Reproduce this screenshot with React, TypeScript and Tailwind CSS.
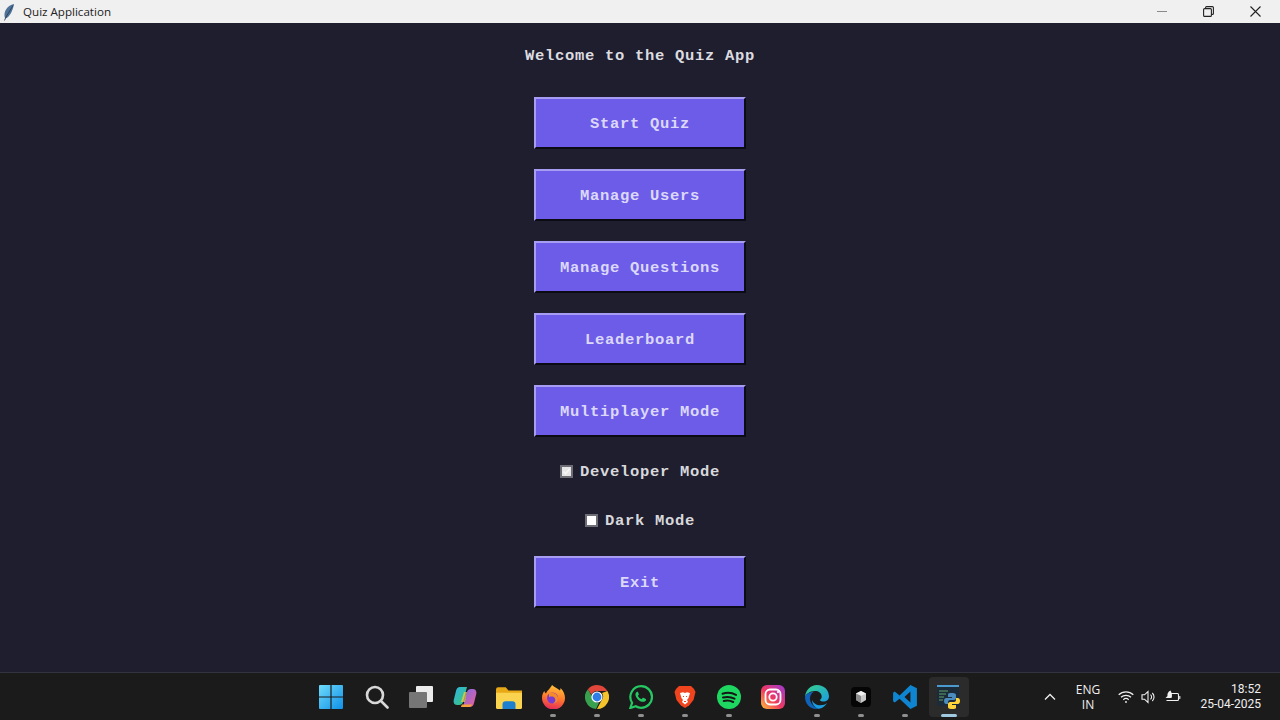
import type { ReactNode } from 'react'

const menuItems = ['Start Quiz', 'Manage Users', 'Manage Questions', 'Leaderboard', 'Multiplayer Mode']

function MenuButton({ label }: { label: string }) {
  return (
    <button className="flex h-[52px] w-[212px] items-center justify-center border-2 border-t-[#a79df2] border-l-[#a79df2] border-r-[#0b0b14] border-b-[#0b0b14] bg-[#6c5ce7] pt-[3px] font-['Liberation_Mono',monospace] text-[15.5px] font-bold tracking-[0.7px] text-[#dcd8fa]">
      {label}
    </button>
  )
}

function CheckRow({ label, checked, className }: { label: string; checked?: boolean; className: string }) {
  return (
    <div className={`flex h-5 items-center gap-[7px] font-['Liberation_Mono',monospace] text-[15.5px] font-bold tracking-[0.7px] text-[#d8d8dc] ${className}`}>
      <span className={`flex h-[13px] w-[13px] items-center justify-center border-2 border-[#6d6d76] ${checked ? 'bg-[#e6e6e6]' : 'bg-white'}`}>
        {checked && (
          <svg width="9" height="9" viewBox="0 0 9 9">
            <path d="M1.500 4.500 3.600 6.800 7.600 2" fill="none" stroke="#f6f6f6" strokeWidth="1.400" />
          </svg>
        )}
      </span>
      <span className="pt-[3px]">{label}</span>
    </div>
  )
}

function Slot({ children, dot, active, className = '' }: { children: ReactNode; dot?: boolean; active?: boolean; className?: string }) {
  return (
    <div className={`relative flex h-10 w-10 items-center justify-center rounded ${active ? 'bg-[#2b2b2b]' : ''} ${className}`}>
      {children}
      {dot && <span className="absolute bottom-0 left-1/2 h-[3px] w-[6px] -translate-x-1/2 rounded-full bg-[#8f8f8f]" />}
      {active && <span className="absolute bottom-0 left-1/2 h-[3px] w-4 -translate-x-1/2 rounded-full bg-[#9fc9e0]" />}
    </div>
  )
}

function TaskbarIcons() {
  return (
    <div className="flex items-center gap-1">
      <Slot>
        <svg width="24" height="24" viewBox="0 0 24 24">
          <defs>
            <linearGradient id="win" x1="0" y1="0" x2="1" y2="1">
              <stop offset="0" stopColor="#6fdcfb" />
              <stop offset="1" stopColor="#0f8fe8" />
            </linearGradient>
          </defs>
          <path d="M0 1a1 1 0 0 1 1-1h10.400v11.400H0zM12.600 0H23a1 1 0 0 1 1 1v10.400H12.600zM0 12.600h11.400V24H1a1 1 0 0 1-1-1zM12.600 12.600H24V23a1 1 0 0 1-1 1H12.600z" fill="url(#win)" />
        </svg>
      </Slot>
      <Slot className="ml-[2px]">
        <svg width="24" height="24" viewBox="0 0 24 24" fill="none" stroke="#d8d8d8" strokeWidth="2.600">
          <circle cx="10" cy="10" r="8" />
          <path d="M16 16l6.500 6.500" strokeLinecap="round" />
        </svg>
      </Slot>
      <Slot>
        <svg width="24" height="24" viewBox="0 0 24 24">
          <rect x="7" y="1" width="17" height="16" rx="1" fill="#ececec" />
          <rect x="0" y="7" width="18" height="16" rx="1" fill="#767676" />
        </svg>
      </Slot>
      <Slot>
        <svg width="24" height="24" viewBox="0 0 24 24">
          <defs>
            <linearGradient id="cop1" x1="0" y1="0" x2="1" y2="1">
              <stop offset="0" stopColor="#2fb4e9" />
              <stop offset="1" stopColor="#3bc46f" />
            </linearGradient>
            <linearGradient id="cop2" x1="0" y1="0" x2="1" y2="1">
              <stop offset="0" stopColor="#7a6cf0" />
              <stop offset="1" stopColor="#ef5f8f" />
            </linearGradient>
          </defs>
          <path d="M7 2h7l-4 15c-.5 2-2 3-4 3H4c-3 0-4-3-3-6l2-8c.5-2.500 2-4 4-4z" fill="url(#cop1)" />
          <path d="M17 22h-7l4-15c.5-2 2-3 4-3h2c3 0 4 3 3 6l-2 8c-.5 2.500-2 4-4 4z" fill="url(#cop2)" />
          <path d="M8 22h8c1.500 0 2.500-1 3-2.500H9c-.5 1-1 2-1 2.500z" fill="#f6a23c" />
          <path d="M14 7h-3l-3 10h4z" fill="#f2d14c" opacity=".7" />
        </svg>
      </Slot>
      <Slot>
        <svg width="26" height="26" viewBox="0 0 24 24">
          <path d="M0 5a2 2 0 0 1 2-2h7l2.500 3H24v16H0z" fill="#e8a917" />
          <path d="M0 8h24v14a1 1 0 0 1-1 1H1a1 1 0 0 1-1-1z" fill="#fbd44f" />
          <path d="M6 23v-4a3 3 0 0 1 3-3h6a3 3 0 0 1 3 3v4z" fill="#1c7fd0" />
        </svg>
      </Slot>
      <Slot dot>
        <svg width="24" height="24" viewBox="0 0 24 24">
          <defs>
            <linearGradient id="ff" x1="0.500" y1="0" x2="0.300" y2="1">
              <stop offset="0" stopColor="#ffc23a" />
              <stop offset="0.500" stopColor="#ff7a2a" />
              <stop offset="1" stopColor="#e3265f" />
            </linearGradient>
          </defs>
          <path d="M11 0c3 2.500 6 3.500 8 5.500.5-1 .5-1.500.5-2.500 3 3 4.500 6.500 4.500 10a11.500 11.500 0 0 1-23 0c0-3 1-5.500 2.500-7 0 1 .5 2 1.500 2.500C6 5.500 9 4 11 0z" fill="url(#ff)" />
          <circle cx="11.500" cy="13" r="5.500" fill="#7b3bd1" />
          <path d="M8 8c4-1.500 8.500 1 9 5 .3 3-2 5.500-5 5.500 2-1 3-3 2-5s-3-2.500-6-1.500z" fill="#f58a2b" />
        </svg>
      </Slot>
      <Slot dot>
        <svg width="24" height="24" viewBox="0 0 24 24">
          <path d="M12 0a12 12 0 0 1 10.400 6H12a6 6 0 0 0-5.600 3.800L2.900 4.200A12 12 0 0 1 12 0z" fill="#e0463a" />
          <path d="M22.400 6A12 12 0 0 1 12 24l4.800-9A6 6 0 0 0 17 8z" fill="#f5c32c" opacity="1" />
          <path d="M2.900 4.200l4.800 8.500A5.500 5.500 0 0 0 14 17.700L11 24A12 12 0 0 1 2.900 4.200z" fill="#37a150" />
          <circle cx="12" cy="12" r="5.600" fill="#fff" />
          <circle cx="12" cy="12" r="4.400" fill="#2f7de8" />
        </svg>
      </Slot>
      <Slot dot>
        <svg width="24" height="24" viewBox="0 0 24 24">
          <path d="M12.200 1.200a10.800 10.800 0 0 1 0 21.600c-2 0-3.800-.5-5.400-1.500L1.300 23l1.800-5.200A10.800 10.800 0 0 1 12.200 1.200z" fill="#1b1b1b" stroke="#25c863" strokeWidth="2.200" />
          <path d="M8.500 6.700c-.5 0-1 .2-1.400.8-.6.8-.8 1.800-.6 2.800.4 2 2 4.300 4.300 5.600 1.500.9 3 1.200 4.300.8 1-.3 1.800-1 2-2 .1-.4 0-.7-.3-.8l-2.400-1.100c-.3-.1-.6 0-.8.200l-.8 1c-.2.200-.4.200-.7.100-1.300-.6-2.400-1.600-3.100-2.800-.1-.3-.1-.5.100-.7l.6-.8c.2-.2.200-.4.100-.7l-1-2.300c-.1-.2-.3-.3-.3-.1z" fill="#25c863" />
        </svg>
      </Slot>
      <Slot dot>
        <svg width="24" height="24" viewBox="0 0 24 24">
          <path d="M6 1h12l3 3 1.500 3-2 8-4.500 5.500L12 23l-4-2.500L3.500 15l-2-8L3 4z" fill="#f0441f" />
          <path d="M7 8l3-.8 2 .8 2-.8 3 .8-1.500 5L14 15l1 2-3 2.500L9 17l1-2-1.500-2z" fill="#fff" />
          <path d="M10 11.500h1M13 11.500h1M11 16l1 1 1-1" stroke="#f0441f" strokeWidth="1" fill="none" />
        </svg>
      </Slot>
      <Slot dot>
        <svg width="24" height="24" viewBox="0 0 24 24">
          <circle cx="12" cy="12" r="12" fill="#1ed760" />
          <path d="M5.500 8.700c4.500-1.300 9.500-1 13.500 1.200M6 12.500c3.800-1 8-.7 11.500 1.200M6.700 16c3.200-.8 6.500-.5 9.500 1" stroke="#161616" strokeWidth="2" strokeLinecap="round" fill="none" />
        </svg>
      </Slot>
      <Slot>
        <svg width="24" height="24" viewBox="0 0 24 24">
          <defs>
            <linearGradient id="ig" x1="0" y1="1" x2="1" y2="0">
              <stop offset="0" stopColor="#fdc13a" />
              <stop offset="0.450" stopColor="#f0385f" />
              <stop offset="1" stopColor="#9b3ad6" />
            </linearGradient>
          </defs>
          <rect width="24" height="24" rx="6" fill="url(#ig)" />
          <rect x="4.500" y="4.500" width="15" height="15" rx="4.500" fill="none" stroke="#fff" strokeWidth="1.800" />
          <circle cx="12" cy="12" r="3.700" fill="none" stroke="#fff" strokeWidth="1.800" />
          <circle cx="17" cy="7" r="1.100" fill="#fff" />
        </svg>
      </Slot>
      <Slot dot>
        <svg width="24" height="24" viewBox="0 0 24 24">
          <defs>
            <linearGradient id="edge" x1="0" y1="0" x2="1" y2="1">
              <stop offset="0" stopColor="#37d089" />
              <stop offset="1" stopColor="#1b9de2" />
            </linearGradient>
          </defs>
          <path d="M12 0c7 0 12 5 12 11.500 0 3-2.500 5-5.500 5-2 0-3.500-.7-3.800-1.500 1.500-.8 2-2 2-3.500C16.700 8 13.500 6 10 6 5 6 1 9 0 12 .5 5 5.500 0 12 0z" fill="url(#edge)" />
          <path d="M0 12c1-3.500 5-5 8.500-5C6 8.500 5 11 5 13.500c0 4 3 8 8 10.300C6 25 0 19.500 0 12z" fill="#0f62b8" />
          <path d="M13 23.800c-3.500-1.500-6-5-6-9 1 3.500 4.500 5.500 8.500 5.500 2.500 0 5-.8 6.500-2.200-2 3.500-5.500 6-8.500 5.700z" fill="#1b9de2" />
        </svg>
      </Slot>
      <Slot dot>
        <svg width="20" height="20" viewBox="0 0 20 20">
          <rect width="20" height="20" rx="4" fill="#050505" />
          <path d="M10 4l5 2.500v6.500L10 16l-5-3V6.500z" fill="#c9c9c9" />
          <path d="M10 4l5 2.500L10 9 5 6.500z" fill="#efefef" />
          <path d="M10 9v7l-5-3V6.500z" fill="#8b8b8b" />
        </svg>
      </Slot>
      <Slot dot>
        <svg width="26" height="26" viewBox="0 0 24 24">
          <path d="M17 1l6 3v16l-6 3-10-9.500L2.500 17 1 16v-8l1.500-1L7 10.500zM17 7l-5.500 5 5.500 5z" fill="#0f85d1" />
        </svg>
      </Slot>
      <Slot active>
        <svg width="26" height="26" viewBox="0 0 26 26">
          <rect x="1" y="1" width="22" height="21" fill="#1c2b3a" />
          <rect x="1" y="1" width="22" height="2" fill="#4a9ad0" />
          <path d="M3 7h9M3 10h7M3 13h5M3 16h4" stroke="#5fa36a" strokeWidth="1" />
          <path d="M15 9c-3 0-3 1-3 2v2h4v1h-6c-1 0-2 1-2 3s1 3 2 3h2v-2c0-1 1-2 2-2h4c1 0 2-1 2-2v-3c0-1-1-2-3-2z" fill="#4b8bbe" />
          <path d="M17 25c3 0 3-1 3-2v-2h-4v-1h6c1 0 2-1 2-3s-1-3-2-3h-2v2c0 1-1 2-2 2h-4c-1 0-2 1-2 2v3c0 1 1 2 3 2z" fill="#ffd43b" />
        </svg>
      </Slot>
    </div>
  )
}

export default function App() {
  return (
    <div className="flex h-[720px] w-[1280px] flex-col overflow-hidden bg-[#1e1e2e] font-['Inter',sans-serif]">
      <div className="flex h-[23px] items-center justify-between bg-[#f0f0f0] pl-[3px] pr-px">
        <div className="flex items-center gap-2">
          <svg width="12" height="18" viewBox="0 0 12 18">
            <path d="M11 1C6 2 2 6 1.500 11c-.2 2 .2 3.500 1 4.500C7 14 10 7 11 1z" fill="#4f7299" />
            <path d="M10 2.500 3 14 1.500 17.500" stroke="#26384f" strokeWidth=".8" fill="none" />
          </svg>
          <span className="font-['Open_Sans',sans-serif] text-[11.6px] text-[#222]">Quiz Application</span>
        </div>
        <div className="flex items-center">
          <div className="flex h-[23px] w-[46px] items-center justify-center">
            <span className="h-px w-[10px] bg-[#8a8a8a]" />
          </div>
          <div className="flex h-[23px] w-[46px] items-center justify-center">
            <svg width="11" height="11" viewBox="0 0 11 11" fill="none" stroke="#222" strokeWidth="1.100">
              <rect x=".6" y="2.600" width="7.800" height="7.800" rx="1" />
              <path d="M2.600 2.400V1.600a1 1 0 0 1 1-1h5.800a1 1 0 0 1 1 1v5.800a1 1 0 0 1-1 1h-.8" />
            </svg>
          </div>
          <div className="flex h-[23px] w-[48px] items-center justify-center">
            <svg width="11" height="11" viewBox="0 0 11 11" stroke="#222" strokeWidth="1.100">
              <path d="M.5.500l10 10M10.500.500l-10 10" />
            </svg>
          </div>
        </div>
      </div>

      <main className="flex h-[649px] flex-col items-center pt-[22px]">
        <h1 className="mb-[32px] h-5 pt-px font-['Liberation_Mono',monospace] text-[15.5px] font-bold leading-5 tracking-[0.7px] text-[#dcdce0]">
          Welcome to the Quiz App
        </h1>
        <div className="flex flex-col gap-5">
          {menuItems.map((item) => (
            <MenuButton key={item} label={item} />
          ))}
        </div>
        <CheckRow label="Developer Mode" checked className="mt-6" />
        <CheckRow label="Dark Mode" className="mt-[29px]" />
        <div className="mt-[26px]">
          <MenuButton label="Exit" />
        </div>
      </main>

      <footer className="flex h-12 items-center border-t border-[#33333f] bg-[#1b1b1b]">
        <div className="ml-[311px]">
          <TaskbarIcons />
        </div>
        <div className="ml-[75px] flex items-center text-[#f0f0f0]">
          <svg width="12" height="7" viewBox="0 0 12 7" fill="none" stroke="#efefef" strokeWidth="1.300">
            <path d="M1 6.500l5-5 5 5" />
          </svg>
          <div className="ml-[14px] flex w-[36px] flex-col items-center font-['Open_Sans',sans-serif] text-xs leading-[15px]">
            <span>ENG</span>
            <span>IN</span>
          </div>
          <div className="ml-[12px] flex items-center gap-[7px]">
            <svg width="16" height="14" viewBox="0 0 16 14" fill="none" stroke="#f0f0f0" strokeWidth="1.200">
              <path d="M.7 4.800a10.500 10.500 0 0 1 14.600 0M3 7.300a7.200 7.200 0 0 1 10 0M5.300 9.700a4 4 0 0 1 5.400 0" />
              <circle cx="8" cy="12" r=".9" fill="#f0f0f0" stroke="none" />
            </svg>
            <svg width="16" height="14" viewBox="0 0 16 14" fill="none" stroke="#f0f0f0" strokeWidth="1.100">
              <path d="M1 4.800h2.500L7 1.500v11L3.500 9.200H1zM9.500 4.700a3 3 0 0 1 0 4.600M11.300 3a5.500 5.500 0 0 1 0 8" />
            </svg>
            <svg width="17" height="14" viewBox="0 0 16 14" fill="none" stroke="#f0f0f0" strokeWidth="1.100">
              <path d="M6 3.500h7a1 1 0 0 1 1 1v5a1 1 0 0 1-1 1H2" />
              <path d="M15.300 6v3" />
              <path d="M6 .500C3.500 1.500 2.500 4 3 6L1 8h6c1-2 .5-5-1-7.500z" fill="#f0f0f0" stroke="none" />
            </svg>
          </div>
          <div className="ml-4 flex w-[64px] flex-col items-end whitespace-nowrap font-['Roboto',sans-serif] text-xs leading-[15px]">
            <span>18:52</span>
            <span>25-04-2025</span>
          </div>
        </div>
      </footer>
    </div>
  )
}
